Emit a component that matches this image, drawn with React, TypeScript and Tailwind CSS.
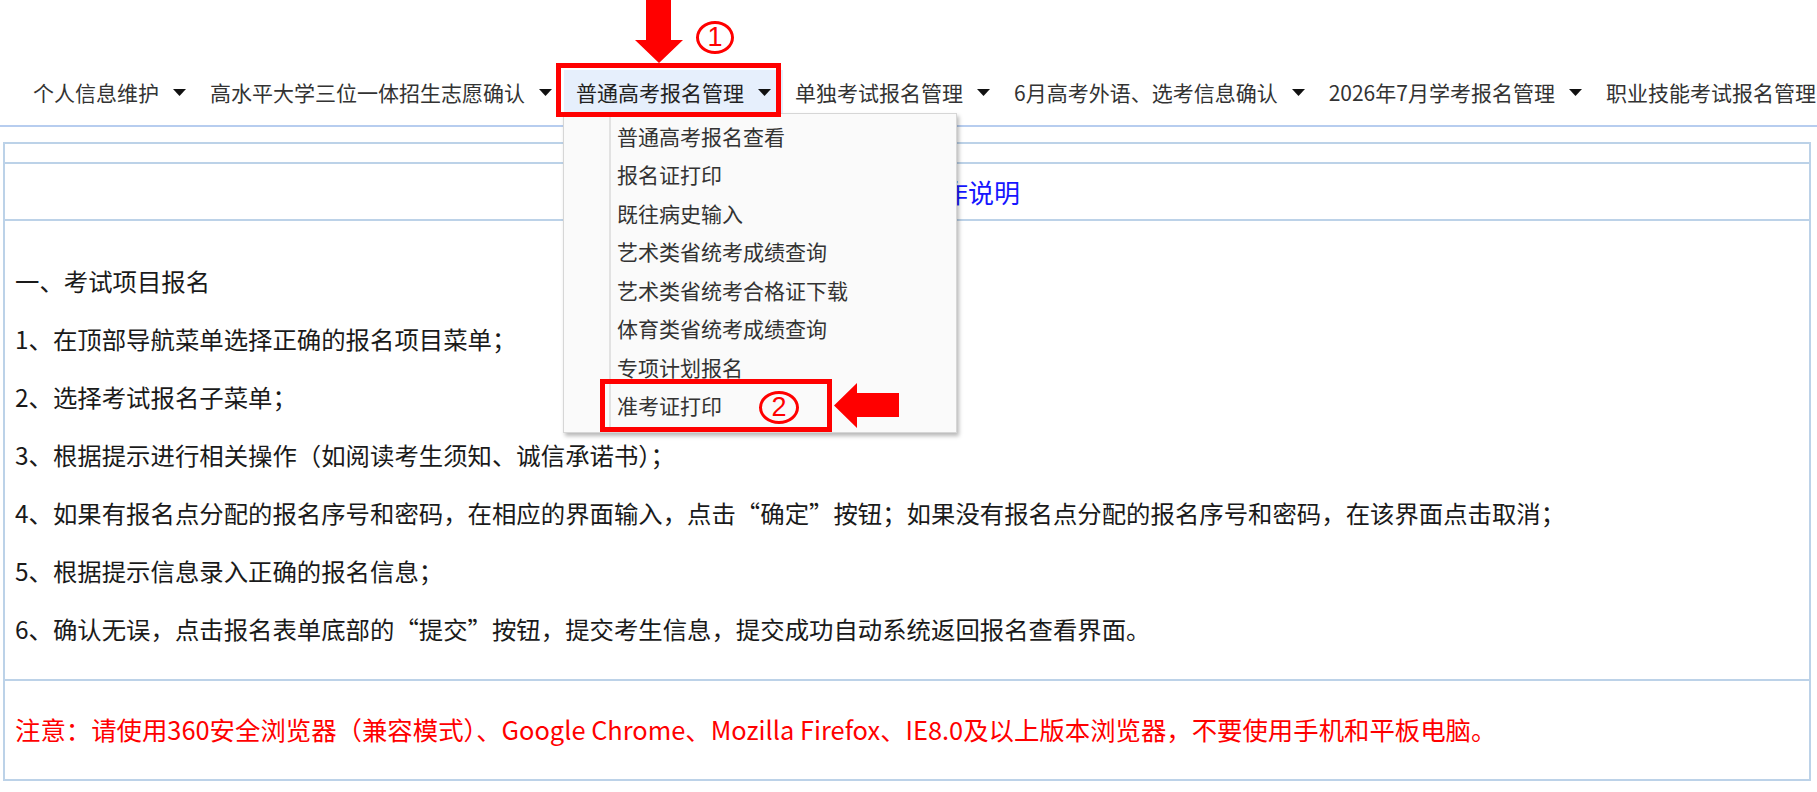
import React from "react";

const navItems = [
  "个人信息维护",
  "高水平大学三位一体招生志愿确认",
  "普通高考报名管理",
  "单独考试报名管理",
  "6月高考外语、选考信息确认",
  "2026年7月学考报名管理",
  "职业技能考试报名管理",
];

const menuItems = [
  "普通高考报名查看",
  "报名证打印",
  "既往病史输入",
  "艺术类省统考成绩查询",
  "艺术类省统考合格证下载",
  "体育类省统考成绩查询",
  "专项计划报名",
  "准考证打印",
];

const steps = [
  "一、考试项目报名",
  "1、在顶部导航菜单选择正确的报名项目菜单；",
  "2、选择考试报名子菜单；",
  "3、根据提示进行相关操作（如阅读考生须知、诚信承诺书）；",
  "4、如果有报名点分配的报名序号和密码，在相应的界面输入，点击“确定”按钮；如果没有报名点分配的报名序号和密码，在该界面点击取消；",
  "5、根据提示信息录入正确的报名信息；",
  "6、确认无误，点击报名表单底部的“提交”按钮，提交考生信息，提交成功自动系统返回报名查看界面。",
];

const Caret = () => (
  <svg width="13" height="7" viewBox="0 0 13 7" className="shrink-0">
    <polygon points="0,0 13,0 6.5,7" fill="#111" />
  </svg>
);

// red circled number used by the annotations
const Circled = ({ n, className }: { n: string; className: string }) => (
  <div
    className={
      "absolute rounded-[50%] border-[3px] border-[#ff0000] flex items-center justify-center text-[27px] leading-none text-[#ff0000] font-['Liberation_Sans',sans-serif] " +
      className
    }
  >
    {n}
  </div>
);

const App = () => {
  return (
    <div className="relative w-[1817px] h-[792px] overflow-hidden bg-white font-['Noto_Sans_CJK_SC',sans-serif]">
      {/* top nav */}
      <div className="h-[127px] pt-[70px] pl-[21px] border-b-2 border-[#b7cdef] flex overflow-hidden">
        {navItems.map((t, i) => (
          <div
            key={t}
            className={
              "h-[44px] px-[12px] flex items-center gap-[14px] whitespace-nowrap shrink-0 text-[21px] leading-none " +
              (i === 2 ? "bg-[#e6effc] text-[#222]" : "text-[#333]")
            }
          >
            <span>{t}</span>
            <Caret />
          </div>
        ))}
      </div>

      {/* content table */}
      <div className="mt-[15px] ml-[3px] w-[1808px] border-2 border-[#bcd2e8]">
        <div className="h-[20px] border-b-2 border-[#bcd2e8]" />
        <div className="h-[57px] pl-[18px] border-b-2 border-[#bcd2e8] flex items-center justify-center text-[26px] leading-none text-[#1616ff]">
          网上报名操作说明
        </div>
        <div className="h-[460px] pt-[31px] pl-[10px] border-b-2 border-[#bcd2e8] text-[24.4px] text-[#1a1a1a]">
          {steps.map((s) => (
            <div key={s} className="h-[58px] flex items-center whitespace-nowrap leading-none">
              {s}
            </div>
          ))}
        </div>
        <div className="h-[98px] pl-[10px] flex items-center text-[25.4px] leading-none text-[#ff0000] whitespace-nowrap">
          注意：请使用360安全浏览器（兼容模式）、Google Chrome、Mozilla Firefox、IE8.0及以上版本浏览器，不要使用手机和平板电脑。
        </div>
      </div>

      {/* dropdown menu */}
      <div className="absolute left-[563px] top-[113px] w-[394px] h-[320px] bg-[#fafafa] border border-[#d6d6d6] shadow-[2px_3px_4px_rgba(0,0,0,0.28)] flex">
        <div className="w-[47px] h-full border-r-2 border-[#e2e2e2]" />
        <div className="pt-[3px] pl-[6px] flex flex-col">
          {menuItems.map((m) => (
            <div key={m} className="h-[38.5px] flex items-center text-[21px] leading-none text-[#333] whitespace-nowrap">
              {m}
            </div>
          ))}
        </div>
      </div>

      {/* annotation 1 */}
      <div className="absolute left-[556px] top-[63px] w-[225px] h-[54px] border-[5px] border-[#ff0000]" />
      <svg className="absolute left-[635px] top-0" width="48" height="63" viewBox="0 0 48 63">
        <polygon points="11,0 36,0 36,40 48,40 24,63 0,40 11,40" fill="#ff0000" />
      </svg>
      <Circled n="1" className="left-[696px] top-[21px] w-[38px] h-[33px]" />

      {/* annotation 2 */}
      <div className="absolute left-[600px] top-[379px] w-[232px] h-[53px] border-[5px] border-[#ff0000]" />
      <Circled n="2" className="left-[759px] top-[391px] w-[40px] h-[33px]" />
      <svg className="absolute left-[834px] top-[383px]" width="65" height="45" viewBox="0 0 65 45">
        <polygon points="0,22.5 23,0 23,10 65,10 65,34 23,34 23,45" fill="#ff0000" />
      </svg>
    </div>
  );
};

export default App;
